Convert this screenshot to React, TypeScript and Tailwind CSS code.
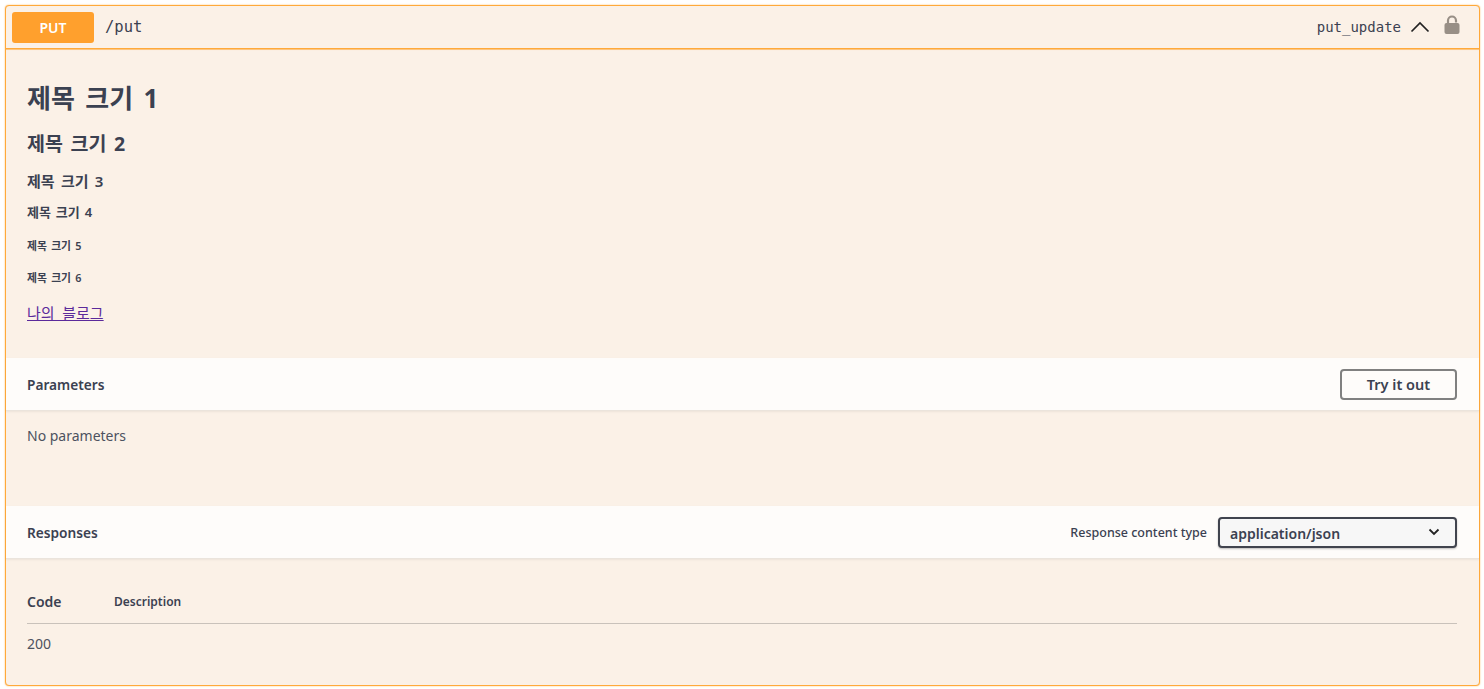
export default function App() {
  return (
    <div className="w-[1484px] h-[689px] bg-white pt-[5px] pl-[5px] pr-[4px] font-['Noto_Sans','Noto_Sans_CJK_KR',sans-serif]">
      <div className="h-[681px] border border-[#ffa93a] rounded-[4px] bg-[#fbf1e7] shadow-[0_0_1.5px_#ffa93a] flex flex-col">
        <div className="h-[43px] shrink-0 border-b border-[#ffa93a] shadow-[0_0.5px_0.5px_rgba(255,169,58,0.6)] flex items-center pl-[6px] pr-[19px]">
          <div className="w-[82px] h-[31px] rounded-[3px] bg-[#ffa02d] text-white text-[14px] font-semibold flex items-center justify-center">PUT</div>
          <div className="ml-[11px] mt-[2px] font-['DejaVu_Sans_Mono',monospace] text-[15.5px] text-[#3b4151]">/put</div>
          <div className="ml-auto mt-[1px] font-['DejaVu_Sans_Mono',monospace] text-[14px] text-[#3b4151]">put_update</div>
          <svg className="ml-[9px]" width="20" height="12" viewBox="0 0 20 12" fill="none">
            <path d="M1.5 10.5 L10 2 L18.5 10.5" stroke="#222" strokeWidth="1.7" />
          </svg>
          <svg className="ml-[14px] mb-[5px]" width="16" height="20" viewBox="0 0 16 20" fill="none">
            <path d="M4 9 V5.5 A4 4 0 0 1 12 5.5 V7.5" stroke="#988f86" strokeWidth="2.2" />
            <rect x="0.5" y="8" width="15" height="11" rx="2" fill="#988f86" />
          </svg>
        </div>

        <div className="h-[309px] shrink-0 pl-[21px] text-[#3b4151] flex flex-col items-start">
          <h1 className="mt-[31px] text-[26px] leading-[36px] font-bold [word-spacing:0.14em]">제목 크기 1</h1>
          <h2 className="mt-[14px] text-[19.5px] leading-[28px] font-bold [word-spacing:0.13em]">제목 크기 2</h2>
          <h3 className="mt-[12px] text-[15px] leading-[22px] font-semibold [word-spacing:0.16em]">제목 크기 3</h3>
          <h4 className="mt-[10px] text-[13px] leading-[20px] font-semibold [word-spacing:0.12em]">제목 크기 4</h4>
          <h5 className="mt-[16px] text-[10.8px] leading-[16px] font-semibold [word-spacing:0.14em]">제목 크기 5</h5>
          <h6 className="mt-[16px] text-[10.8px] leading-[16px] font-semibold [word-spacing:0.14em]">제목 크기 6</h6>
          <a className="mt-[16px] text-[15px] leading-[22px] underline text-[#5b2a9b] [word-spacing:0.25em]">나의 블로그</a>
        </div>

        <div className="h-[53px] shrink-0 bg-[#fefcfa] border-b border-[#ebe4dc] shadow-[0_1px_2px_rgba(0,0,0,0.06)] flex items-center justify-between pl-[21px] pr-[22px]">
          <span className="mt-[2px] text-[13.7px] font-semibold text-[#3b4151]">Parameters</span>
          <button className="w-[117px] h-[31px] pt-[1px] border-2 border-[#808080] rounded-[4px] text-[14.5px] font-semibold text-[#3b4151]">Try it out</button>
        </div>

        <div className="h-[95px] shrink-0 pl-[21px] pt-[15px] text-[14px] leading-[20px] text-[#4d5260]">No parameters</div>

        <div className="h-[53px] shrink-0 bg-[#fefcfa] border-b border-[#ebe4dc] shadow-[0_1px_2px_rgba(0,0,0,0.06)] flex items-center pl-[21px] pr-[22px]">
          <span className="mt-[2px] text-[13.7px] font-semibold text-[#3b4151]">Responses</span>
          <span className="ml-auto mt-[3px] text-[12.5px] font-medium text-[#3b4151]">Response content type</span>
          <div className="ml-[11px] mt-[1px] w-[239px] h-[31px] border-2 border-[#41444e] rounded-[4px] bg-[#f7f7f7] shadow-[0_1px_2px_rgba(0,0,0,0.25)] flex items-center justify-between pl-[10px] pr-[15px] pt-[1px] text-[14px] font-semibold text-[#3b4151]">
            <span>application/json</span>
            <svg className="mb-[2px]" width="12" height="8" viewBox="0 0 12 8" fill="none">
              <path d="M1.5 1.5 L6 6 L10.5 1.5" stroke="#222" strokeWidth="1.8" />
            </svg>
          </div>
        </div>

        <div className="pl-[21px] pr-[22px] pt-[31px] text-[#3b4151]">
          <div className="h-[34px] border-b border-[#c9c2bb] flex items-start">
            <span className="w-[87px] text-[14px] leading-[24px] font-semibold">Code</span>
            <span className="pt-[1px] text-[12px] leading-[22px] font-semibold">Description</span>
          </div>
          <div className="pt-[10px] text-[14px] leading-[20px] text-[#4d5260]">200</div>
        </div>
      </div>
    </div>
  );
}
